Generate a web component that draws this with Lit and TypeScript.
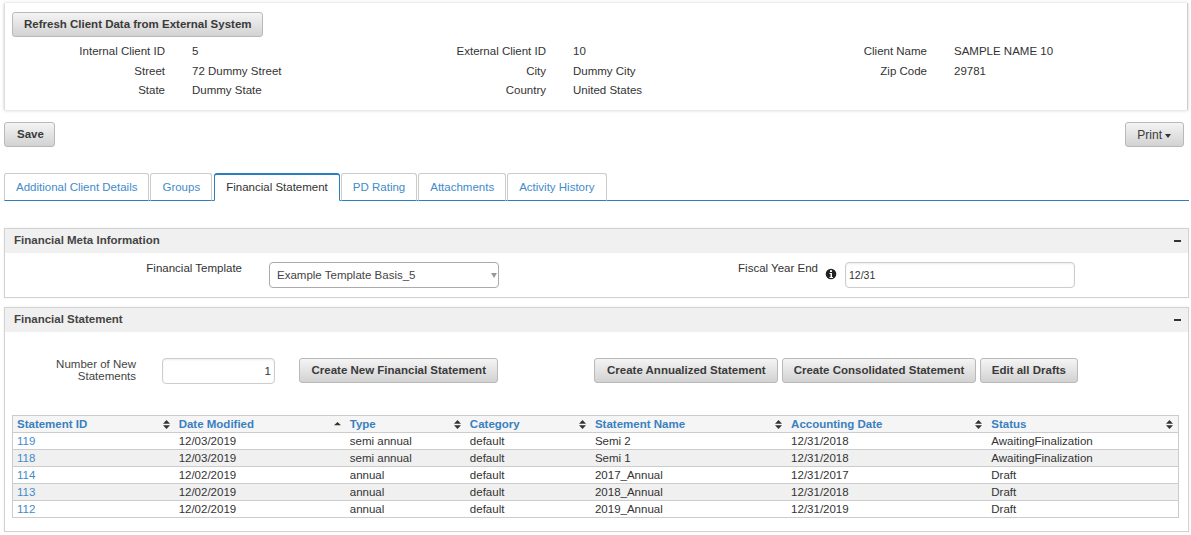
import { LitElement, html, css, svg } from "lit";
import { customElement } from "lit/decorators.js";

const sortBoth = svg`<svg class="sort" width="7" height="9" viewBox="0 0 7 9"><path d="M3.5 0 7 3.7H0zM3.5 9 0 5.3h7z" fill="#333"/></svg>`;
const sortUp = svg`<svg class="sort" width="7" height="9" viewBox="0 0 7 9"><path d="M3.5 2 7 5.3H0z" fill="#333"/></svg>`;

const cols = [
  { name: "Statement ID", w: 162 },
  { name: "Date Modified", w: 171, up: true },
  { name: "Type", w: 120 },
  { name: "Category", w: 125 },
  { name: "Statement Name", w: 196 },
  { name: "Accounting Date", w: 200 },
  { name: "Status", w: 191 },
];
const rows = [
  ["119", "12/03/2019", "semi annual", "default", "Semi 2", "12/31/2018", "AwaitingFinalization"],
  ["118", "12/03/2019", "semi annual", "default", "Semi 1", "12/31/2018", "AwaitingFinalization"],
  ["114", "12/02/2019", "annual", "default", "2017_Annual", "12/31/2017", "Draft"],
  ["113", "12/02/2019", "annual", "default", "2018_Annual", "12/31/2018", "Draft"],
  ["112", "12/02/2019", "annual", "default", "2019_Annual", "12/31/2019", "Draft"],
];
const tabs = ["Additional Client Details", "Groups", "Financial Statement", "PD Rating", "Attachments", "Activity History"];
const info = [
  ["Internal Client ID", "5", "External Client ID", "10", "Client Name", "SAMPLE NAME 10"],
  ["Street", "72 Dummy Street", "City", "Dummy City", "Zip Code", "29781"],
  ["State", "Dummy State", "Country", "United States", "", ""],
];

@customElement("app-root")
export class AppRoot extends LitElement {
  static styles = css`
    :host { display: block; height: 535px; overflow: hidden; background: #fff; font: 11.5px/17px "Liberation Sans", Arial, sans-serif; color: #333; }
    * { box-sizing: border-box; }
    .page { padding: 3px 2px 0 4px; }
    .btn { display: block; height: 25px; padding: 0 11px; border: 1px solid #b9b9b9; border-radius: 3px; background: linear-gradient(#f4f4f4, #d2d2d2); font: bold 11.5px/23px "Liberation Sans", Arial, sans-serif; color: #3a3a3a; white-space: nowrap; }
    .top { height: 107px; margin-right: 1px; padding: 9px 0 0 7px; border-left: 1px solid #ddd; border-right: 1px solid #ccc; box-shadow: 0 1px 3px rgba(0,0,0,.12), 0 -1px 3px rgba(0,0,0,.08); }
    .refresh { width: 251px; line-height: 22px; }
    .info { margin: 5px 0 0 -7px; }
    .info-row { display: grid; grid-template-columns: 160px 27px 194px 160px 27px 194px 160px 27px 1fr; height: 19.5px; align-items: center; }
    .lbl { text-align: right; }
    .actions { display: flex; justify-content: space-between; margin: 12px 5px 0 0; }
    .save { padding: 0 10px 0 12px; }
    .caret { display: inline-block; margin-left: 3px; vertical-align: middle; border-top: 4px solid #333; border-left: 3.5px solid transparent; border-right: 3.5px solid transparent; }
    .print { font-weight: normal; font-size: 12px; line-height: 25px; padding: 0 12px 0 11px; }
    .tabs { display: flex; height: 28px; margin: 26px 0 0; padding: 0; border-bottom: 1px solid #2a7fc1; }
    .tab { height: 28px; padding: 0 11px; border: 1px solid #ccc; border-bottom: 1px solid #2a7fc1; border-radius: 3px 3px 0 0; line-height: 26px; color: #428bca; margin-right: 1px; white-space: nowrap; }
    .tab.on { height: 28px; margin-left: 1px; border: 1px solid #2a7fc1; border-top-width: 2px; border-bottom-color: #fff; line-height: 24px; color: #333; }
    .panel { border: 1px solid #d2d2d2; box-shadow: 0 0 2px rgba(0,0,0,.08); }
    .p1 { height: 70px; margin-top: 27px; }
    .p2 { height: 225px; margin-top: 9px; padding-bottom: 0; }
    .head { display: flex; justify-content: space-between; align-items: center; height: 24px; padding: 0 7px 2px 9px; background: #f0f0f0; font-weight: bold; color: #444; }
    .minus { width: 7px; height: 2px; margin-top: 2px; background: #333; }
    .meta { display: flex; padding-top: 9px; }
    .m-lbl { text-align: right; line-height: 12px; }
    .m-lbl.a { width: 237px; }
    .sel { position: relative; width: 230px; height: 26px; margin-left: 27px; border: 1px solid #aaa; border-radius: 4px; padding-left: 7px; line-height: 24px; color: #444; }
    .sel::after { content: ""; position: absolute; right: 1px; top: 10px; border-top: 5px solid #999; border-left: 3px solid transparent; border-right: 3px solid transparent; }
    .m-lbl.b { width: 319px; }
    .i { margin: 6px 0 0 7px; width: 12px; height: 12px; }
    .field { height: 26px; border: 1px solid #ccc; border-radius: 4px; box-shadow: inset 0 1px 2px rgba(0,0,0,.08); line-height: 24px; color: #333; }
    .fy { width: 230px; margin-left: 8px; padding-left: 3px; font-size: 10.5px; }
    .create { display: flex; align-items: flex-start; margin-top: 26px; }
    .n-lbl { width: 131px; text-align: right; line-height: 12px; color: #444; }
    .num { width: 113px; margin-left: 26px; padding-right: 3px; text-align: right; }
    .create .btn { margin-right: 4px; padding: 0 11.5px; }
    .create .first { margin-left: 24px; margin-right: 96px; }
    .create .narrow { padding: 0 10.5px; }
    .create .edit { padding: 0 11px; }
    table { margin: 31px 0 0 7px; width: 1167px; border-collapse: collapse; table-layout: fixed; border: 1px solid #ccc; }
    th { height: 17px; padding: 0 5px 0 4px; background: #f5f5f5; text-align: left; color: #3a80bf; font-size: 11.5px; font-weight: bold; line-height: 16px; border-bottom: 1px solid #ccc; }
    th span { display: flex; justify-content: space-between; align-items: center; white-space: nowrap; }
    td { height: 17px; padding: 0 0 0 4px; line-height: 16px; border-bottom: 1px solid #ccc; white-space: nowrap; }
    tr:nth-child(even) td { background: #f0f0f0; }
    td a { color: #428bca; text-decoration: none; }
    .sort { flex: none; }
  `;

  render() {
    return html`<div class="page">
      <div class="top">
        <div class="btn refresh">Refresh Client Data from External System</div>
        <div class="info">
          ${info.map(
            (r) => html`<div class="info-row">
              <div class="lbl">${r[0]}</div><div></div><div>${r[1]}</div>
              <div class="lbl">${r[2]}</div><div></div><div>${r[3]}</div>
              <div class="lbl">${r[4]}</div><div></div><div>${r[5]}</div>
            </div>`
          )}
        </div>
      </div>
      <div class="actions">
        <div class="btn save">Save</div>
        <div class="btn print">Print<span class="caret"></span></div>
      </div>
      <div class="tabs">
        ${tabs.map((t, i) => html`<div class="tab ${i === 2 ? "on" : ""}">${t}</div>`)}
      </div>
      <div class="panel p1">
        <div class="head">Financial Meta Information<span class="minus"></span></div>
        <div class="meta">
          <div class="m-lbl a">Financial Template</div>
          <div class="sel">Example Template Basis_5</div>
          <div class="m-lbl b">Fiscal Year End</div>
          <svg class="i" viewBox="0 0 12 12"><circle cx="6" cy="6" r="5.3" fill="#222"/><rect x="5" y="2.2" width="2" height="1.8" fill="#fff"/><path d="M4.5 5H7v4h1v1H4.5V9h1V6h-1z" fill="#fff"/></svg>
          <div class="field fy">12/31</div>
        </div>
      </div>
      <div class="panel p2">
        <div class="head">Financial Statement<span class="minus"></span></div>
        <div class="create">
          <div class="n-lbl">Number of New Statements</div>
          <div class="field num">1</div>
          <div class="btn first">Create New Financial Statement</div>
          <div class="btn">Create Annualized Statement</div>
          <div class="btn narrow">Create Consolidated Statement</div>
          <div class="btn edit">Edit all Drafts</div>
        </div>
        <table>
          <colgroup>${cols.map((c) => html`<col style="width:${c.w}px" />`)}</colgroup>
          <thead><tr>${cols.map((c) => html`<th><span>${c.name}${c.up ? sortUp : sortBoth}</span></th>`)}</tr></thead>
          <tbody>
            ${rows.map(
              (r) => html`<tr>${r.map((v, i) => html`<td>${i === 0 ? html`<a>${v}</a>` : v}</td>`)}</tr>`
            )}
          </tbody>
        </table>
      </div>
    </div>`;
  }
}
